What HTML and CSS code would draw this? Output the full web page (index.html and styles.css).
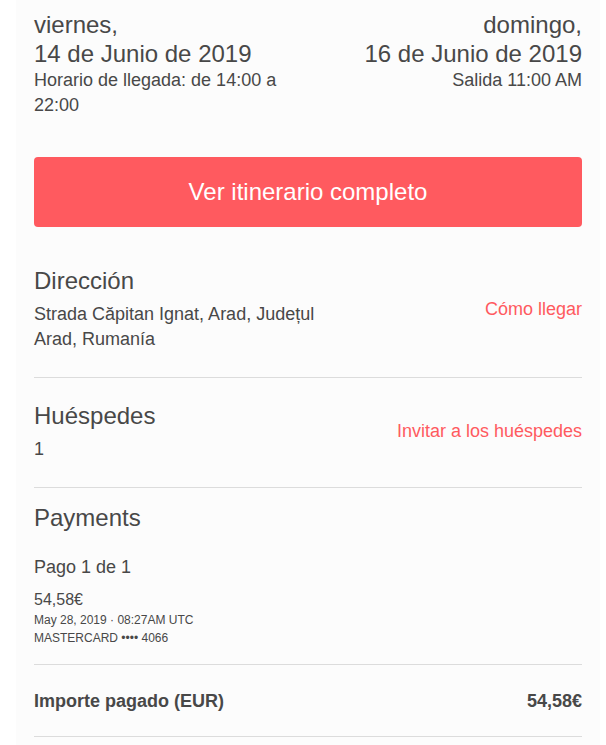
FILE: index.html
```html
<!DOCTYPE html>
<html lang="es">
<head>
<meta charset="utf-8">
<title>Itinerario</title>
<link rel="stylesheet" href="styles.css">
</head>
<body>
<main class="panel">
  <header class="dates">
    <div class="date-col">
      <div class="date">viernes,<br>14 de Junio de 2019</div>
      <div class="date-detail">Horario de llegada: de 14:00 a 22:00</div>
    </div>
    <div class="date-col date-col-right">
      <div class="date">domingo,<br>16 de Junio de 2019</div>
      <div class="date-detail">Salida 11:00 AM</div>
    </div>
  </header>

  <a class="btn-primary" href="#">Ver itinerario completo</a>

  <section class="row row-first">
    <div class="row-main">
      <h2 class="row-title">Dirección</h2>
      <p class="row-text">Strada Căpitan Ignat, Arad, Județul Arad, Rumanía</p>
    </div>
    <a class="row-link" href="#">Cómo llegar</a>
  </section>

  <section class="row">
    <div class="row-main">
      <h2 class="row-title">Huéspedes</h2>
      <p class="row-text">1</p>
    </div>
    <a class="row-link" href="#">Invitar a los huéspedes</a>
  </section>

  <section class="row row-payments">
    <div class="row-main">
      <h2 class="row-title">Payments</h2>
      <div class="payment">
        <div class="payment-title">Pago 1 de 1</div>
        <div class="payment-amount">54,58€</div>
        <div class="payment-meta">May 28, 2019 · 08:27AM UTC</div>
        <div class="payment-meta">MASTERCARD •••• 4066</div>
      </div>
    </div>
  </section>

  <section class="row row-total">
    <span class="total-label">Importe pagado (EUR)</span>
    <span class="total-value">54,58€</span>
  </section>
</main>
</body>
</html>
```
FILE: styles.css
```css
* {
  box-sizing: border-box;
}

html, body {
  margin: 0;
  padding: 0;
  background: #ffffff;
}

body {
  font-family: "Liberation Sans", Arial, sans-serif;
  color: #484848;
}

.panel {
  margin-left: 16px;
  width: 584px;
  padding: 10px 18px 0 18px;
  background: #fcfcfc;
  min-height: 745px;
}

.dates {
  display: flex;
  justify-content: space-between;
}

.date-col {
  width: 50%;
}

.date-col-right {
  text-align: right;
}

.date {
  font-size: 24px;
  line-height: 29px;
}

.date-detail {
  font-size: 18px;
  line-height: 25px;
}

.btn-primary {
  display: flex;
  align-items: center;
  justify-content: center;
  margin-top: 39px;
  height: 70px;
  border-radius: 4px;
  background: #ff5a5f;
  color: #ffffff;
  font-size: 24px;
  text-decoration: none;
}

.row {
  display: flex;
  align-items: center;
  justify-content: space-between;
  padding: 23px 0 25px 0;
  border-bottom: 1px solid #dcdcdc;
}

.row-first {
  margin-top: 15px;
  padding-top: 24px;
}

.row-main {
  width: 58.333%;
}

.row-title {
  margin: 0 0 6px 0;
  font-size: 24px;
  line-height: 30px;
  font-weight: normal;
}

.row-text {
  margin: 0;
  font-size: 18px;
  line-height: 25px;
}

.row-link {
  font-size: 18px;
  line-height: 25px;
  color: #ff5a5f;
  text-decoration: none;
}

.row-payments {
  padding: 15px 0 17px 0;
}

.payment {
  margin-top: 22px;
}

.payment-title {
  font-size: 18px;
  line-height: 25px;
}

.payment-amount {
  margin-top: 9px;
  font-size: 16px;
  line-height: 22px;
}

.payment-meta {
  font-size: 12px;
  line-height: 18px;
}

.row-total {
  padding: 24px 0 22px 0;
  font-size: 18px;
  line-height: 25px;
  font-weight: bold;
}
```
